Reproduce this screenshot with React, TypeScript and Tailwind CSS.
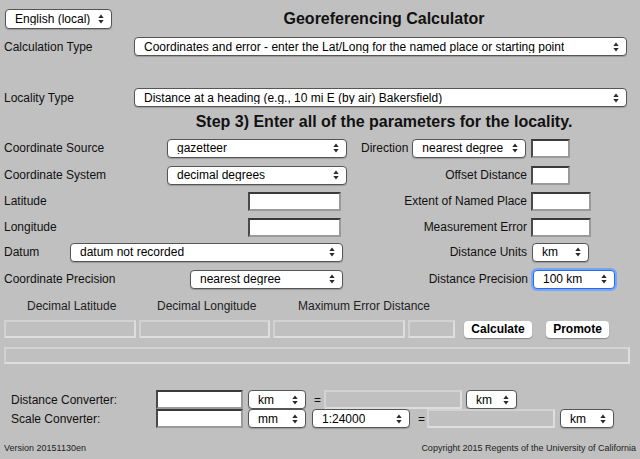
// Georeferencing Calculator — серый «классический» макет формы
import type { ReactNode } from 'react'

// Двойная стрелка как у нативного select в Safari
function Arrows() {
  return (
    <svg width="6" height="10" viewBox="0 0 6 10" className="shrink-0">
      <path d="M3 0.6L5.7 4H0.3Z M3 9.4L0.3 6H5.7Z" fill="#2a2a2a" />
    </svg>
  )
}

function Sel({ children, className = '', focus = false }: { children: ReactNode; className?: string; focus?: boolean }) {
  return (
    <div
      className={`flex h-[19px] items-center justify-between rounded-[4px] border bg-white pl-[9px] pr-[7px] text-[12px] leading-none text-black ${
        focus ? 'border-[#2a6ae8] shadow-[0_0_0_2px_#78a6f6]' : 'border-[#555] shadow-[0_1px_1px_rgba(0,0,0,0.2)]'
      } ${className}`}
    >
      <span className="truncate">{children}</span>
      <Arrows />
    </div>
  )
}

function Field({ className = '' }: { className?: string }) {
  return (
    <input
      className={`h-[19px] border-2 border-t-[#3a3a3a] border-l-[#4a4a4a] border-r-[#9a9a9a] border-b-[#9a9a9a] bg-white outline-none ${className}`}
    />
  )
}

// Поле результата — только для чтения, светлая рамка
function Out({ className = '' }: { className?: string }) {
  return <div className={`border-2 border-[#dedede] border-t-[#d2d2d2] border-l-[#d2d2d2] bg-[#c0c0c0] ${className}`} />
}

function Btn({ children, className = '' }: { children: ReactNode; className?: string }) {
  return (
    <button
      className={`flex h-[17px] items-center justify-center rounded-[4px] bg-white text-[12px] font-bold text-black shadow-[0_1px_1px_rgba(0,0,0,0.3)] ${className}`}
    >
      {children}
    </button>
  )
}

export default function App() {
  return (
    <div className="h-[459px] w-[640px] overflow-hidden bg-[#c0c0c0] font-['Liberation_Sans',Arial,sans-serif] text-[12px] text-[#111]">
      {/* ─── Заголовок ─── */}
      <div className="flex h-[29px] items-center pt-[9px]">
        <Sel className="ml-[5px] h-[20px] w-[107px]">English (local)</Sel>
        <div className="flex-1 pl-[16px] text-center text-[16px] font-bold">Georeferencing Calculator</div>
      </div>

      <div className="mt-[8px] flex h-[19px] items-center">
        <div className="w-[134px] pl-[4px]">Calculation Type</div>
        <Sel className="w-[493px]">Coordinates and error - enter the Lat/Long for the named place or starting point</Sel>
      </div>

      <div className="mt-[32px] flex h-[19px] items-center">
        <div className="w-[134px] pl-[4px]">Locality Type</div>
        <Sel className="w-[493px]">Distance at a heading (e.g., 10 mi E (by air) Bakersfield)</Sel>
      </div>

      <div className="mt-[5px] h-[20px] pl-[128px] text-center text-[16px] font-bold leading-[20px]">
        Step 3) Enter all of the parameters for the locality.
      </div>

      {/* ─── Параметры ─── */}
      <div className="mt-[6px] flex h-[20px] items-center">
        <div className="flex w-[355px] items-center">
          <div className="w-[167px] pl-[4px]">Coordinate Source</div>
          <Sel className="w-[180px]">gazetteer</Sel>
        </div>
        <div className="ml-[6px]">Direction</div>
        <Sel className="ml-[4px] w-[114px]">nearest degree</Sel>
        <Field className="ml-[5px] w-[39px]" />
      </div>

      <div className="mt-[7px] flex h-[20px] items-center">
        <div className="flex w-[355px] items-center">
          <div className="w-[167px] pl-[4px]">Coordinate System</div>
          <Sel className="w-[180px]">decimal degrees</Sel>
        </div>
        <div className="w-[172px] text-right">Offset Distance</div>
        <Field className="ml-[4px] w-[39px]" />
      </div>

      <div className="mt-[6px] flex h-[20px] items-center">
        <div className="flex w-[355px] items-center">
          <div className="w-[248px] pl-[4px]">Latitude</div>
          <Field className="w-[93px]" />
        </div>
        <div className="w-[172px] text-right">Extent of Named Place</div>
        <Field className="ml-[4px] w-[60px]" />
      </div>

      <div className="mt-[6px] flex h-[20px] items-center">
        <div className="flex w-[355px] items-center">
          <div className="w-[248px] pl-[4px]">Longitude</div>
          <Field className="w-[93px]" />
        </div>
        <div className="w-[172px] text-right">Measurement Error</div>
        <Field className="ml-[4px] w-[60px]" />
      </div>

      <div className="mt-[5px] flex h-[20px] items-center">
        <div className="flex w-[355px] items-center">
          <div className="w-[70px] pl-[4px]">Datum</div>
          <Sel className="w-[273px]">datum not recorded</Sel>
        </div>
        <div className="w-[172px] text-right">Distance Units</div>
        <Sel className="ml-[5px] w-[57px]">km</Sel>
      </div>

      <div className="mt-[7px] flex h-[20px] items-center">
        <div className="flex w-[355px] items-center">
          <div className="w-[190px] pl-[4px]">Coordinate Precision</div>
          <Sel className="w-[153px]">nearest degree</Sel>
        </div>
        <div className="w-[173px] text-right">Distance Precision</div>
        <Sel focus className="ml-[5px] w-[82px]">100 km</Sel>
      </div>

      {/* ─── Результат ─── */}
      <div className="mt-[10px] flex h-[14px] items-center text-[#222]">
        <div className="w-[157px] pl-[27px]">Decimal Latitude</div>
        <div className="w-[141px]">Decimal Longitude</div>
        <div>Maximum Error Distance</div>
      </div>

      <div className="mt-[7px] flex h-[18px] items-center pl-[4px]">
        <Out className="h-[18px] w-[132px]" />
        <Out className="ml-[3px] h-[18px] w-[131px]" />
        <Out className="ml-[3px] h-[18px] w-[132px]" />
        <Out className="ml-[3px] h-[18px] w-[47px]" />
        <Btn className="ml-[9px] w-[68px]">Calculate</Btn>
        <Btn className="ml-[14px] w-[63px]">Promote</Btn>
      </div>

      <Out className="ml-[4px] mt-[9px] h-[17px] w-[626px]" />

      {/* ─── Конвертеры ─── */}
      <div className="mt-[26px] flex h-[19px] items-center">
        <div className="w-[156px] pl-[11px]">Distance Converter:</div>
        <Field className="w-[87px]" />
        <Sel className="ml-[5px] w-[58px]">km</Sel>
        <div className="ml-[8px]">=</div>
        <Out className="ml-[3px] h-[19px] w-[138px]" />
        <Sel className="ml-[4px] w-[51px]">km</Sel>
      </div>

      <div className="flex h-[19px] items-center">
        <div className="w-[156px] pl-[11px]">Scale Converter:</div>
        <Field className="w-[87px]" />
        <Sel className="ml-[5px] w-[58px]">mm</Sel>
        <Sel className="ml-[6px] w-[98px]">1:24000</Sel>
        <div className="ml-[8px]">=</div>
        <Out className="ml-[2px] h-[19px] w-[128px]" />
        <Sel className="ml-[5px] w-[54px]">km</Sel>
      </div>

      {/* ─── Подвал ─── */}
      <div className="mt-[15px] flex h-[11px] items-center justify-between px-[4px] text-[9px] text-[#222]">
        <span>Version 20151130en</span>
        <span>Copyright 2015 Regents of the University of California</span>
      </div>
    </div>
  )
}
